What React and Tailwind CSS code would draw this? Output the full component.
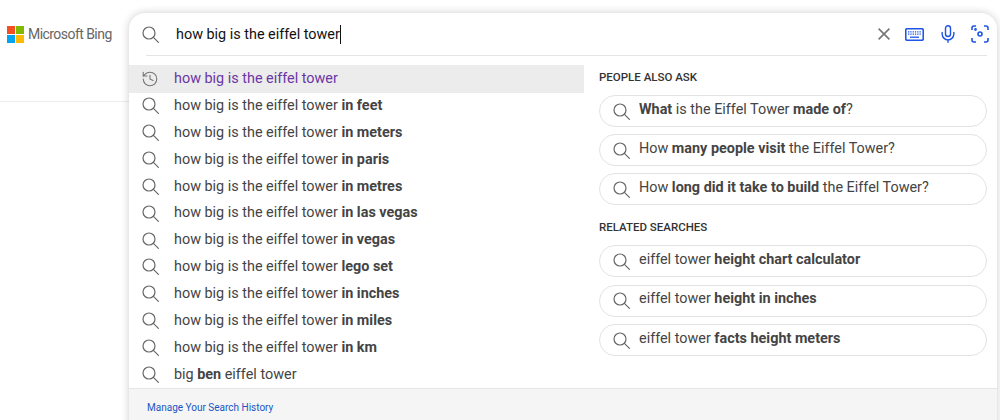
import { History, Mic } from 'lucide-react'

const suggestions = [
  ['in feet'],
  ['in meters'],
  ['in paris'],
  ['in metres'],
  ['in las vegas'],
  ['in vegas'],
  ['lego set'],
  ['in inches'],
  ['in miles'],
  ['in km'],
]

function MsLogo() {
  return (
    <svg width="17" height="17" viewBox="0 0 17 17">
      <rect x="0" y="0" width="8" height="8" fill="#f25022" />
      <rect x="9" y="0" width="8" height="8" fill="#7fba00" />
      <rect x="0" y="9" width="8" height="8" fill="#00a4ef" />
      <rect x="9" y="9" width="8" height="8" fill="#ffb900" />
    </svg>
  )
}

function SearchIcon({ size = 17, className = '' }) {
  return (
    <svg width={size} height={size} viewBox="0 0 17 17" fill="none" stroke="#666" strokeWidth="1.2" className={className}>
      <circle cx="7" cy="7" r="6" />
      <path d="M11.4 11.4L16.4 16.4" strokeLinecap="round" />
    </svg>
  )
}

function ClearIcon() {
  return (
    <svg width="12" height="12" viewBox="0 0 12 12" fill="none" stroke="#777" strokeWidth="1.6">
      <path d="M0.6 0.6L11.4 11.4M11.4 0.6L0.6 11.4" />
    </svg>
  )
}

function KeyboardIcon() {
  return (
    <svg width="19" height="13" viewBox="0 0 19 13" fill="none" stroke="#1f55e6">
      <rect x="0.75" y="0.75" width="17.5" height="11.5" rx="1.5" strokeWidth="1.6" />
      <path d="M3 3.8h13M3 6.2h13" strokeWidth="1.3" strokeDasharray="1.3 1" />
      <path d="M5 9.2h9" strokeWidth="1.3" />
    </svg>
  )
}

function VisualIcon() {
  return (
    <svg width="18" height="18" viewBox="0 0 18 18" fill="none" stroke="#1f55e6" strokeWidth="1.6">
      <path d="M1 5V3a2 2 0 0 1 2-2h2M13 1h2a2 2 0 0 1 2 2v2M17 13v2a2 2 0 0 1-2 2h-2M5 17H3a2 2 0 0 1-2-2v-2" />
      <circle cx="9" cy="9" r="2" />
      <circle cx="4.5" cy="4.5" r="0.6" />
    </svg>
  )
}

function Pill({ children }) {
  return (
    <div className="flex items-center h-8 rounded-2xl border border-[#e3e3e3] pl-[13px] text-[14.4px] text-[#444]">
      <SearchIcon size={17} className="mr-[9px]" />
      <span className="pb-[3px]">{children}</span>
    </div>
  )
}

function Row({ children }) {
  return (
    <div className="flex items-center h-[26.85px] pl-[13px] text-[14.4px] text-[#444]">
      <SearchIcon size={17} className="mr-[15px]" />
      <span>{children}</span>
    </div>
  )
}

export default function App() {
  return (
    <div className="flex h-[420px] w-[1000px] overflow-hidden bg-white font-['Roboto',sans-serif]">
      <div className="w-[129px] shrink-0">
        <div className="h-[102px] border-b border-[#ececec] pt-[26px] pl-[7px] flex items-start gap-[4px]">
          <MsLogo />
          <span className="text-[14px] tracking-[-0.55px] leading-[17px] text-[#666] whitespace-nowrap">Microsoft Bing</span>
        </div>
      </div>
      <div className="mt-[13px] w-[868px] h-[420px] rounded-tl-[16px] rounded-tr-[16px] bg-white shadow-[0_0_8px_rgba(0,0,0,0.2)]">
        <div className="flex items-center h-[42px] pl-[13px] pr-[8px]">
          <SearchIcon size={17} className="mr-[17px]" />
          <span className="text-[14.4px] text-[#111] border-r border-[#111] leading-[19px]">how big is the eiffel tower</span>
          <div className="ml-auto flex items-center">
            <ClearIcon />
            <div className="ml-[15px]"><KeyboardIcon /></div>
            <Mic size={20} strokeWidth={1.7} className="text-[#1f55e6] ml-[14px] mr-[13px]" />
            <VisualIcon />
          </div>
        </div>
        <div className="h-px bg-[#e5e5e5] ml-[17px] mr-[10px]" />
        <div className="flex h-[332px] pt-[9px]">
          <div className="w-[455px] shrink-0">
            <div className="flex items-center h-[27.5px] pl-[12px] bg-[#ececec] text-[14.4px] text-[#6b36a5]">
              <History size={18} strokeWidth={1.5} className="text-[#777] mr-[15px]" />
              <span>how big is the eiffel tower</span>
            </div>
            {suggestions.map(([tail]) => (
              <Row key={tail}>how big is the eiffel tower <b className="font-bold">{tail}</b></Row>
            ))}
            <Row>big <b className="font-bold">ben</b> eiffel tower</Row>
          </div>
          <div className="flex-1 pl-[15px] pr-[10px]">
            <h3 className="h-[21px] text-[11.5px] leading-[25px] font-medium text-[#333]">PEOPLE ALSO ASK</h3>
            <div className="mt-[9px] flex flex-col gap-[7px]">
              <Pill><b>What</b> is the Eiffel Tower <b>made of</b>?</Pill>
              <Pill>How <b>many people visit</b> the Eiffel Tower?</Pill>
              <Pill>How <b>long did it take to build</b> the Eiffel Tower?</Pill>
            </div>
            <h3 className="mt-[11px] h-[21px] text-[11.5px] leading-[23px] font-medium text-[#333]">RELATED SEARCHES</h3>
            <div className="mt-[8px] flex flex-col gap-[7.5px]">
              <Pill>eiffel tower <b>height chart calculator</b></Pill>
              <Pill>eiffel tower <b>height in inches</b></Pill>
              <Pill>eiffel tower <b>facts height meters</b></Pill>
            </div>
          </div>
        </div>
        <div className="h-[40px] bg-[#f5f5f5] border-t border-[#e5e5e5] pl-[18px] pt-[11px] text-[10px] text-[#1a55c4]">
          Manage Your Search History
        </div>
      </div>
    </div>
  )
}
